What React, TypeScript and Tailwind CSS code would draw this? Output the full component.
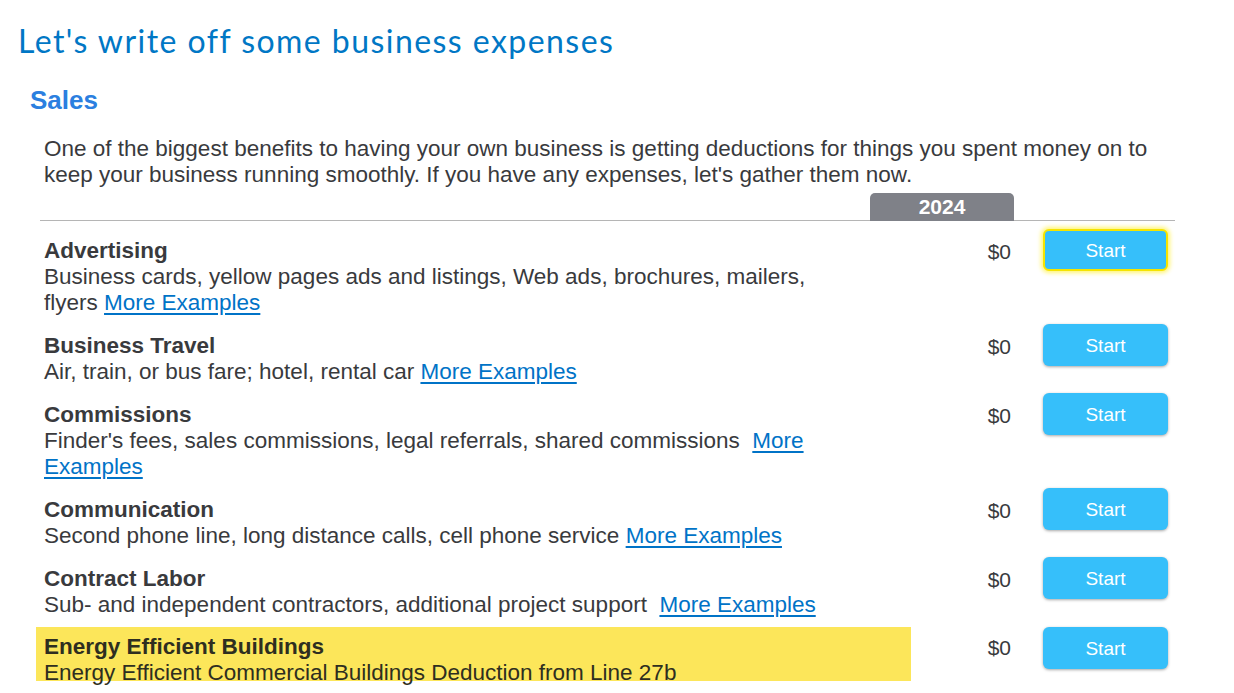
const rows = [
  {
    title: "Advertising",
    desc: "Business cards, yellow pages ads and listings, Web ads, brochures, mailers, flyers",
    sep: " ",
    focused: true,
  },
  { title: "Business Travel", desc: "Air, train, or bus fare; hotel, rental car", sep: " " },
  {
    title: "Commissions",
    desc: "Finder's fees, sales commissions, legal referrals, shared commissions",
    sep: "\u00a0 ",
  },
  { title: "Communication", desc: "Second phone line, long distance calls, cell phone service", sep: " " },
  { title: "Contract Labor", desc: "Sub- and independent contractors, additional project support", sep: "\u00a0 " },
];

const StartButton = ({ focused }: { focused?: boolean }) => (
  <button
    className={
      "w-[125px] h-[42px] rounded-[6px] bg-[#36bffa] text-white text-[19px] leading-none " +
      (focused
        ? "border-2 border-[#f5e400] shadow-[0_0_4px_2px_rgba(255,236,0,0.55)]"
        : "shadow-[0_1px_3px_rgba(0,0,0,0.35)]")
    }
  >
    Start
  </button>
);

const App = () => {
  return (
    <div className="w-[1234px] h-[693px] overflow-hidden bg-white text-[#393a3d] font-['Liberation_Sans',Arial,sans-serif]">
      <h1 className="pl-[18px] pt-[21px] text-[32px] leading-[40px] text-[#0077c5] font-['Lato','Open_Sans',sans-serif] tracking-[1.45px]">
        Let's write off some business expenses
      </h1>
      <h2 className="pl-[30px] pt-[23px] text-[26px] leading-[32px] font-bold text-[#2b7fe0]">Sales</h2>

      <p className="pl-[44px] pr-[60px] pt-[20px] text-[22.5px] leading-[26px]">
        One of the biggest benefits to having your own business is getting deductions for things you spent money on to
        keep your business running smoothly. If you have any expenses, let's gather them now.
      </p>

      {/* header line with year tab */}
      <div className="ml-[40px] w-[1135px] flex items-end border-b border-[#b5b5b5] mt-[5px]">
        <div className="w-[830px]" />
        <div className="w-[144px] h-[28px] -mb-px rounded-t-[5px] bg-[#7f8188] text-white text-[21px] font-bold text-center leading-[28px]">
          2024
        </div>
      </div>

      <div className="mt-[17px]">
        {rows.map((r) => (
          <div key={r.title} className="flex pl-[36px] mb-[17px]">
            <div className="w-[875px] pl-[8px]">
              <div className="w-[815px] text-[22.5px] leading-[26px]">
                <div className="font-bold">{r.title}</div>
                <div>
                  {r.desc}
                  {r.sep}
                  <a href="#" className="text-[#0073c7] underline underline-offset-[3px]">
                    More Examples
                  </a>
                </div>
              </div>
            </div>
            <div className="w-[100px] text-right text-[21px] leading-[26px] pt-[1px]">$0</div>
            <div className="pl-[32px] -mt-[9px]">
              <StartButton focused={r.focused} />
            </div>
          </div>
        ))}

        <div className="flex pl-[36px] -mt-[8px]">
          <div className="w-[875px] h-[54px] bg-[#fce65a] pl-[8px] pt-[7px] text-[22.5px] leading-[26px] text-[#2e2e20]">
            <div className="font-bold">Energy Efficient Buildings</div>
            <div className="whitespace-nowrap">Energy Efficient Commercial Buildings Deduction from Line 27b</div>
          </div>
          <div className="w-[100px] text-right text-[21px] leading-[26px] pt-[8px]">$0</div>
          <div className="pl-[32px]">
            <StartButton />
          </div>
        </div>
      </div>
    </div>
  );
};

export default App;
